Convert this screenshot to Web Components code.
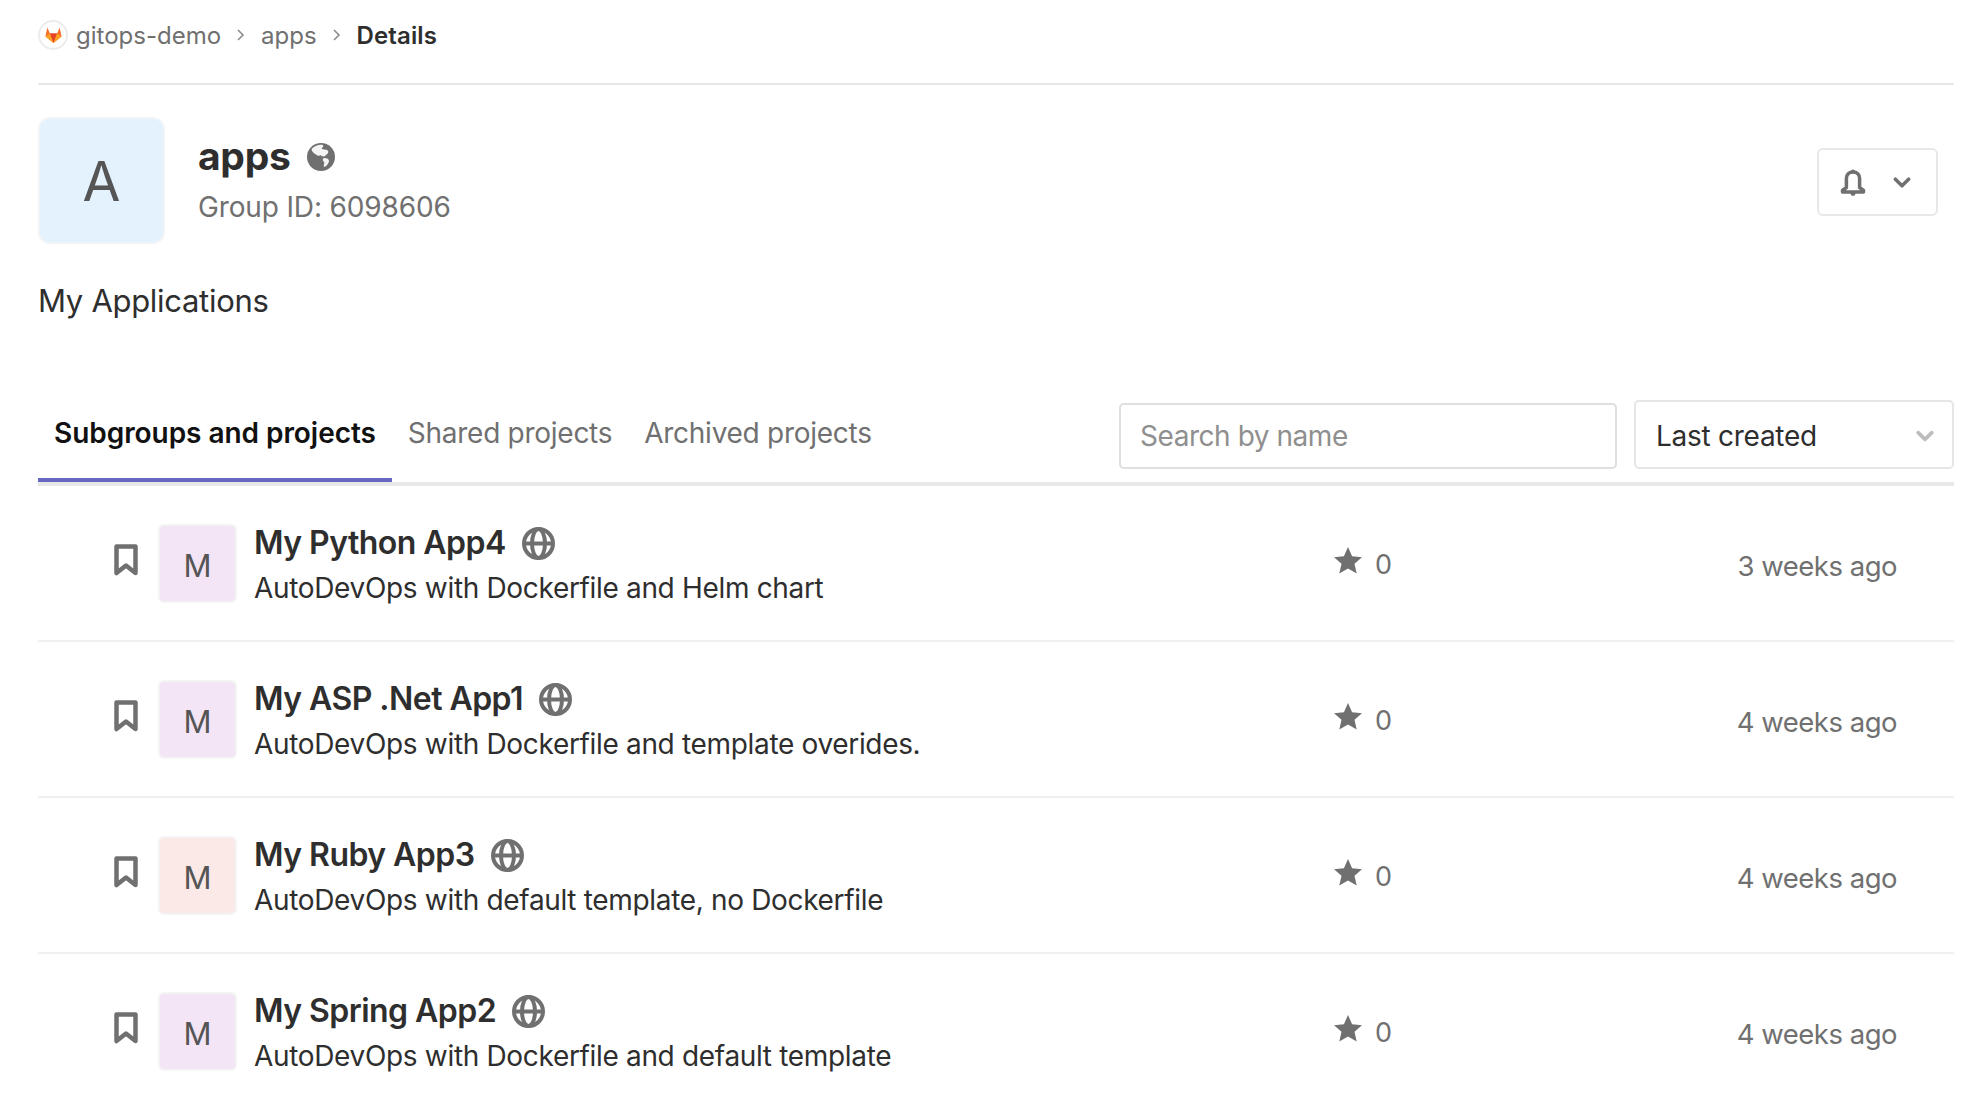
<!DOCTYPE html>
<html>
<head>
<meta charset="utf-8">
<title>apps</title>
<style>
  html, body { margin: 0; background: #fff; }
  body {
    height: 1116px;
    overflow: hidden;
    padding: 0 28px 0 38px;
    box-sizing: border-box;
    font-family: Inter, "Noto Sans", sans-serif;
    color: #2e2e2e;
  }
</style>
</head>
<body>
  <crumb-bar></crumb-bar>
  <group-head></group-head>
  <tab-bar></tab-bar>
  <project-row name="My Python App4" desc="AutoDevOps with Dockerfile and Helm chart" when="3 weeks ago" tint="#f3e5f5"></project-row>
  <project-row name="My ASP .Net App1" desc="AutoDevOps with Dockerfile and template overides." when="4 weeks ago" tint="#f3e5f5"></project-row>
  <project-row name="My Ruby App3" desc="AutoDevOps with default template, no Dockerfile" when="4 weeks ago" tint="#fbe9e7"></project-row>
  <project-row name="My Spring App2" desc="AutoDevOps with Dockerfile and default template" when="4 weeks ago" tint="#f3e5f5" last></project-row>

<script>
/* little helper, every element builds its own shadow root from a string */
function shadow(el, html) {
  const template = document.createElement("template");
  template.innerHTML = html;
  el.attachShadow({ mode: "open" });
  el.shadowRoot.appendChild(template.content.cloneNode(true));
}

const CHEVRON = `<svg viewBox="0 0 16 10" width="100%" height="100%" style="display:block"><path d="M2 2l6 6 6-6" fill="none" stroke="currentColor" stroke-width="3.200" stroke-linecap="round" stroke-linejoin="round"/></svg>`;

class CrumbBar extends HTMLElement {
  constructor() {
    super();
    shadow(this, `
      <style>
        :host { display: flex; align-items: center; height: 83px; border-bottom: 2px solid #e8e8e8; font-size: 24px; color: #707070; }
        .logo { width: 30px; height: 30px; margin: -13px 8px 0 0; border-radius: 50%; border: 2px solid #ececec; box-sizing: border-box; display: flex; align-items: center; justify-content: center; }
        .row { display: flex; align-items: center; margin-top: -13px; }
        .sep { width: 9px; height: 14px; margin: 0 16px 0 15px; color: #8c8c8c; }
        b { font-weight: 600; color: #2e2e2e; letter-spacing: 0.1px; }
      </style>
      <span class="logo">
        <svg width="17" height="16" viewBox="0 0 16 15">
          <path d="M8 15L0.4 9 2.2 0.5 4.6 6H11.4L13.8 0.5 15.6 9z" fill="#fc6d26"/>
          <path d="M8 15L4.6 6H11.4z" fill="#e24329"/>
          <path d="M0.4 9L8 15 4.6 6z" fill="#fca326"/>
          <path d="M15.6 9L8 15 11.4 6z" fill="#fca326"/>
        </svg>
      </span>
      <span class="row">
        <span>gitops-demo</span>
        <svg class="sep" viewBox="0 0 9 14"><path d="M2 2l5 5-5 5" fill="none" stroke="currentColor" stroke-width="1.6"/></svg>
        <span>apps</span>
        <svg class="sep" viewBox="0 0 9 14"><path d="M2 2l5 5-5 5" fill="none" stroke="currentColor" stroke-width="1.6"/></svg>
        <b>Details</b>
      </span>
    `);
  }
}

class GroupHead extends HTMLElement {
  constructor() {
    super();
    shadow(this, `
      <style>
        :host { display: block; padding-top: 32px; }
        .top { display: flex; align-items: center; padding-right: 16px; }
        .avatar { width: 127px; height: 127px; box-sizing: border-box; border: 2px solid #f2f5f8; border-radius: 12px; background: #e3f2fd; color: #555; font-size: 55px; display: flex; align-items: center; justify-content: center; margin-right: 33px; }
        .info { flex: 1; padding-top: 2px; }
        h1 { margin: 0; font-size: 39px; font-weight: 700; line-height: 42px; color: #2e2e2e; display: flex; align-items: center; gap: 16px; letter-spacing: -0.3px; }
        h1 svg { margin-top: 3px; }
        .gid { font-size: 28px; line-height: 44px; margin-top: 8px; color: #707070; letter-spacing: -0.14px; }
        .bell { width: 121px; height: 68px; margin-top: 3px; box-sizing: border-box; border: 2px solid #e8e8e8; border-radius: 6px; display: flex; align-items: center; color: #707070; padding-left: 21px; }
        .chev { display: block; width: 18px; height: 11px; margin-left: 27px; }
        p { margin: 0; padding-top: 37px; font-size: 31px; line-height: 40px; color: #2e2e2e; letter-spacing: -0.3px; }
      </style>
      <div class="top">
        <div class="avatar">A</div>
        <div class="info">
          <h1>apps
            <svg width="30" height="30" viewBox="0 0 30 30">
              <circle cx="15" cy="15" r="14" fill="#707070"/>
              <path d="M6 6.500C9 3.500 14 2 17 3c1 2-2 3-1 4 3 1 5 0 6 2s-1 3-3 5c-2 1-3 0-5-1-1 2-3 0-5-1-2-2-4-3-3-6z M18 16c3 0 5 1 5 3 0 2-3 6-5 6-1-2 1-4 0-5-1-1-2-3 0-4z" fill="#f4f4f4"/>
            </svg>
          </h1>
          <div class="gid">Group ID: 6098606</div>
        </div>
        <div class="bell">
          <svg width="26" height="27" viewBox="0 0 26 27">
            <path d="M13 3c-4 0-6.600 2.600-6.600 6.500v9L2.500 21.500v1.500h21v-1.500l-3.900-3v-9C19.600 5.600 17 3 13 3z" fill="none" stroke="currentColor" stroke-width="3.500" stroke-linejoin="round"/>
            <circle cx="13" cy="2.500" r="2" fill="currentColor"/>
            <path d="M10.500 24h5c0 2-1 2.800-2.500 2.800s-2.500-.8-2.500-2.800z" fill="currentColor"/>
          </svg>
          <span class="chev">${CHEVRON}</span>
        </div>
      </div>
      <p>My Applications</p>
    `);
  }
}

class TabBar extends HTMLElement {
  constructor() {
    super();
    shadow(this, `
      <style>
        :host { display: flex; align-items: flex-end; height: 120px; margin-top: 41px; border-bottom: 4px solid #e8e8e8; font-size: 28px; letter-spacing: -0.27px; }
        .tabs { display: flex; flex: 1; height: 100%; align-items: flex-start; }
        .tab { padding: 54px 16px 0; color: #707070; height: 100%; box-sizing: border-box; line-height: 34px; }
        .tab.on { color: #111; font-weight: 600; letter-spacing: -0.05px; box-shadow: inset 0 -4px 0 #6666c4; }
        .tools { display: flex; gap: 17px; align-items: flex-end; padding-bottom: 13px; }
        .search { width: 498px; height: 66px; box-sizing: border-box; border: 2px solid #dfdfdf; border-radius: 5px; color: #8f8f8f; letter-spacing: -0.45px; display: flex; align-items: center; padding-left: 19px; }
        .sort { width: 320px; height: 69px; box-sizing: border-box; border: 2px solid #e6e6e6; border-radius: 5px; color: #2e2e2e; display: flex; align-items: center; justify-content: space-between; padding: 3px 18px 0 20px; }
        .chev { display: block; width: 18px; height: 12px; color: #bdbdbd; }
      </style>
      <div class="tabs">
        <div class="tab on">Subgroups and projects</div>
        <div class="tab">Shared projects</div>
        <div class="tab">Archived projects</div>
      </div>
      <div class="tools">
        <div class="search">Search by name</div>
        <div class="sort"><span>Last created</span><span class="chev">${CHEVRON}</span></div>
      </div>
    `);
  }
}

class ProjectRow extends HTMLElement {
  constructor() {
    super();
    shadow(this, `
      <style>
        :host { display: flex; height: 156px; box-sizing: border-box; border-bottom: 2px solid #f0f0f0; align-items: flex-start; padding-top: 38px; }
        :host([last]) { border-bottom: 0; }
        .mark { width: 24px; height: 32px; margin: 20px 20px 0 76px; flex: none; }
        .avatar { width: 79px; height: 79px; flex: none; box-sizing: border-box; border: 2px solid #f4f4f4; border-radius: 6px; color: #555; font-size: 31px; padding-top: 3px; display: flex; align-items: center; justify-content: center; margin-right: 17px; }
        .main { flex: 1; }
        .name { display: flex; align-items: center; gap: 16px; font-size: 32px; font-weight: 600; line-height: 38px; color: #2e2e2e; letter-spacing: -0.54px; }
        .desc { font-size: 28px; line-height: 34px; margin-top: 9px; color: #2e2e2e; letter-spacing: -0.33px; }
        .stars { width: 393px; flex: none; display: flex; align-items: flex-start; gap: 13px; color: #707070; font-size: 27px; line-height: 34px; margin-top: 23px; }
        .stars span { padding-top: 1px; }
        .when { width: 170px; margin-right: 57px; flex: none; text-align: right; white-space: nowrap; color: #707070; font-size: 27.500px; line-height: 34px; margin-top: 25px; letter-spacing: -0.5px; }
      </style>
      <svg class="mark" viewBox="0 0 24 32"><path d="M2.500 2.500h19v26.500l-9.500-7.500-9.500 7.500z" fill="none" stroke="#707070" stroke-width="4.500" stroke-linejoin="round"/></svg>
      <div class="avatar">M</div>
      <div class="main">
        <div class="name"><span class="t"></span>
          <svg width="33" height="33" viewBox="0 0 33 33" fill="none" stroke="#707070" stroke-width="4">
            <circle cx="16.500" cy="16.500" r="14.500"/>
            <ellipse cx="16.500" cy="16.500" rx="6.500" ry="14.500"/>
            <path d="M2 16.500h29"/>
          </svg>
        </div>
        <div class="desc"></div>
      </div>
      <div class="stars">
        <svg width="28" height="27" viewBox="0 0 28 27"><path d="M14 0l4.100 9.200 9.900 1-7.500 6.600 2.200 9.700L14 21.400 5.300 26.500l2.200-9.700L0 10.200l9.900-1z" fill="#707070"/></svg>
        <span>0</span>
      </div>
      <div class="when"></div>
    `);
  }

  connectedCallback() {
    this.shadowRoot.querySelector(".t").textContent = this.getAttribute("name");
    this.shadowRoot.querySelector(".desc").textContent = this.getAttribute("desc");
    this.shadowRoot.querySelector(".when").textContent = this.getAttribute("when");
    this.shadowRoot.querySelector(".avatar").style.background = this.getAttribute("tint");
  }
}

customElements.define("crumb-bar", CrumbBar);
customElements.define("group-head", GroupHead);
customElements.define("tab-bar", TabBar);
customElements.define("project-row", ProjectRow);
</script>
</body>
</html>
